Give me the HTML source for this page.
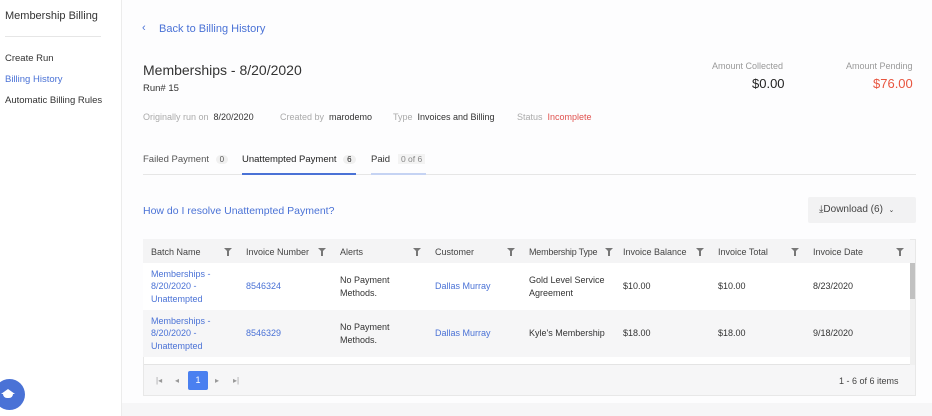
<!DOCTYPE html>
<html><head><style>
*{margin:0;padding:0;box-sizing:border-box}
body{width:932px;height:416px;overflow:hidden;background:#fdfdfe;font-family:"Liberation Sans",sans-serif;color:#333;position:relative;font-size:10px}
.abs{position:absolute;white-space:nowrap}
.side{position:absolute;left:0;top:0;width:122px;height:416px;background:#fff;border-right:1px solid #ececec}
.blue{color:#4a72d6}
.gray{color:#999}
table{border-collapse:collapse;position:absolute;left:143px;top:239px;width:767px;table-layout:fixed}
td,th{font-weight:normal;text-align:left;padding:0 8px;font-size:9px;vertical-align:middle;line-height:12.5px}
th{height:24px;background:#f4f4f5;color:#444;position:relative;padding-top:2px}
th .f{position:absolute;right:6px;top:9px;width:0;height:0;border-left:4px solid transparent;border-right:4px solid transparent;border-top:4px solid #777}
th .f:after{content:"";position:absolute;left:-1px;top:-1px;width:2px;height:5px;background:#777}
tr.r td{height:47px}
tr.w{background:#fff}tr.g{background:#f6f6f7}
</style></head><body>
<div class="side">
<div class="abs" style="left:5px;top:10px;font-size:11px;color:#333">Membership Billing</div>
<div style="position:absolute;left:5px;top:36px;width:96px;border-top:1px solid #e6e6e6"></div>
<div class="abs" style="left:5px;top:53px;font-size:9.5px">Create Run</div>
<div class="abs blue" style="left:5px;top:74px;font-size:9.5px">Billing History</div>
<div class="abs" style="left:5px;top:95px;font-size:9.5px">Automatic Billing Rules</div>
<div style="position:absolute;left:-6px;top:379px;width:31px;height:31px;border-radius:50%;background:#4a72d6"></div>
<div class="abs" style="left:1px;top:389px;width:0;height:0;border-left:7px solid transparent;border-right:7px solid transparent;border-bottom:5px solid #fff"></div>
<div class="abs" style="left:3px;top:394px;width:10px;height:4px;background:#fff;border-radius:0 0 4px 4px"></div>
</div>
<div class="abs blue" style="left:142px;top:22px;font-size:11px">&lsaquo;</div>
<div class="abs blue" style="left:159px;top:23px;font-size:11px">Back to Billing History</div>
<div class="abs" style="left:143px;top:62px;font-size:14px;color:#333">Memberships - 8/20/2020</div>
<div class="abs" style="left:143px;top:83px;font-size:9.5px">Run# 15</div>
<div class="abs" style="left:143px;top:112px;font-size:9px"><span style="color:#aaa">Originally run on</span>&nbsp; 8/20/2020</div>
<div class="abs" style="left:280px;top:112px;font-size:9px"><span style="color:#aaa">Created by</span>&nbsp; marodemo</div>
<div class="abs" style="left:393px;top:112px;font-size:9px"><span style="color:#aaa">Type</span>&nbsp; Invoices and Billing</div>
<div class="abs" style="left:517px;top:112px;font-size:9px"><span style="color:#aaa">Status</span>&nbsp; <span style="color:#e0524f">Incomplete</span></div>
<div class="abs" style="left:712px;top:61px;font-size:9px;color:#999">Amount Collected</div>
<div class="abs" style="left:752px;top:76px;font-size:13px;color:#222">$0.00</div>
<div class="abs" style="left:846px;top:61px;font-size:9px;color:#999">Amount Pending</div>
<div class="abs" style="left:873px;top:76px;font-size:13px;color:#e8553f">$76.00</div>
<div class="abs" style="left:143px;top:154px;font-size:9.5px;color:#555">Failed Payment <span style="display:inline-block;background:#f0f0f0;border-radius:6px;padding:0 4px;margin-left:4px;font-size:8px">0</span></div>
<div class="abs" style="left:242px;top:154px;font-size:9.5px;color:#222">Unattempted Payment <span style="display:inline-block;background:#f0f0f0;border-radius:6px;padding:0 4px;margin-left:4px;font-size:8px">6</span></div>
<div class="abs" style="left:371px;top:154px;font-size:9.5px;color:#333">Paid &nbsp;&nbsp;<span style="color:#888;font-size:8.5px;background:#f3f3f3;padding:0 3px">0 of 6</span></div>
<div style="position:absolute;left:143px;top:174px;width:773px;border-top:1px solid #e6e6e6"></div>
<div style="position:absolute;left:242px;top:173px;width:114px;height:2px;background:#4a72d6"></div>
<div style="position:absolute;left:371px;top:173px;width:55px;height:2px;background:#c5d3f3"></div>
<div class="abs blue" style="left:143px;top:205px;font-size:10.5px">How do I resolve Unattempted Payment?</div>
<div class="abs" style="left:808px;top:197px;width:108px;height:26px;background:#f2f2f3;border-radius:2px;font-size:10px;color:#444;padding:7px 0 0 11px">&#x2913;Download (6) &nbsp;<span style="font-size:7px">&#x2304;</span></div>
<div style="position:absolute;left:143px;top:239px;width:773px;height:157px;border:1px solid #e8e8e8;background:#f6f6f7"></div>
<table>
<colgroup><col style="width:95px"><col style="width:94px"><col style="width:95px"><col style="width:94px"><col style="width:94px"><col style="width:95px"><col style="width:95px"><col style="width:105px"></colgroup>
<tr><th>Batch Name<i class="f"></i></th><th>Invoice Number<i class="f"></i></th><th>Alerts<i class="f"></i></th><th>Customer<i class="f"></i></th><th style="letter-spacing:-0.2px">Membership Type<i class="f" style="right:2px"></i></th><th>Invoice Balance<i class="f"></i></th><th>Invoice Total<i class="f"></i></th><th>Invoice Date<i class="f"></i></th></tr>
<tr class="r w"><td class="blue">Memberships -<br>8/20/2020 -<br>Unattempted</td><td class="blue">8546324</td><td>No Payment<br>Methods.</td><td class="blue">Dallas Murray</td><td style="white-space:nowrap">Gold Level Service<br>Agreement</td><td>$10.00</td><td>$10.00</td><td>8/23/2020</td></tr>
<tr class="r g"><td class="blue">Memberships -<br>8/20/2020 -<br>Unattempted</td><td class="blue">8546329</td><td>No Payment<br>Methods.</td><td class="blue">Dallas Murray</td><td style="white-space:nowrap">Kyle's Membership</td><td>$18.00</td><td>$18.00</td><td>9/18/2020</td></tr>
</table>
<div style="position:absolute;left:144px;top:357px;width:771px;height:8px;background:#fff;border-bottom:1px solid #e4e4e4"></div>
<div style="position:absolute;left:910px;top:263px;width:5px;height:102px;background:#f0f0f0"></div>
<div style="position:absolute;left:910px;top:263px;width:5px;height:36px;background:#c1c1c1"></div>
<div class="abs" style="left:156px;top:376px;font-size:8px;color:#999">|&#x25C2;</div>
<div class="abs" style="left:175px;top:376px;font-size:8px;color:#999">&#x25C2;</div>
<div class="abs" style="left:188px;top:371px;width:20px;height:19px;background:#4a80f0;border-radius:2px;color:#fff;font-size:9px;text-align:center;line-height:19px">1</div>
<div class="abs" style="left:215px;top:376px;font-size:8px;color:#999">&#x25B8;</div>
<div class="abs" style="left:233px;top:376px;font-size:8px;color:#999">&#x25B8;|</div>
<div class="abs" style="left:839px;top:376px;font-size:9px;color:#444">1 - 6 of 6 items</div>
<div style="position:absolute;left:122px;top:403px;width:810px;height:13px;background:#f6f6f7"></div>
</body></html>
